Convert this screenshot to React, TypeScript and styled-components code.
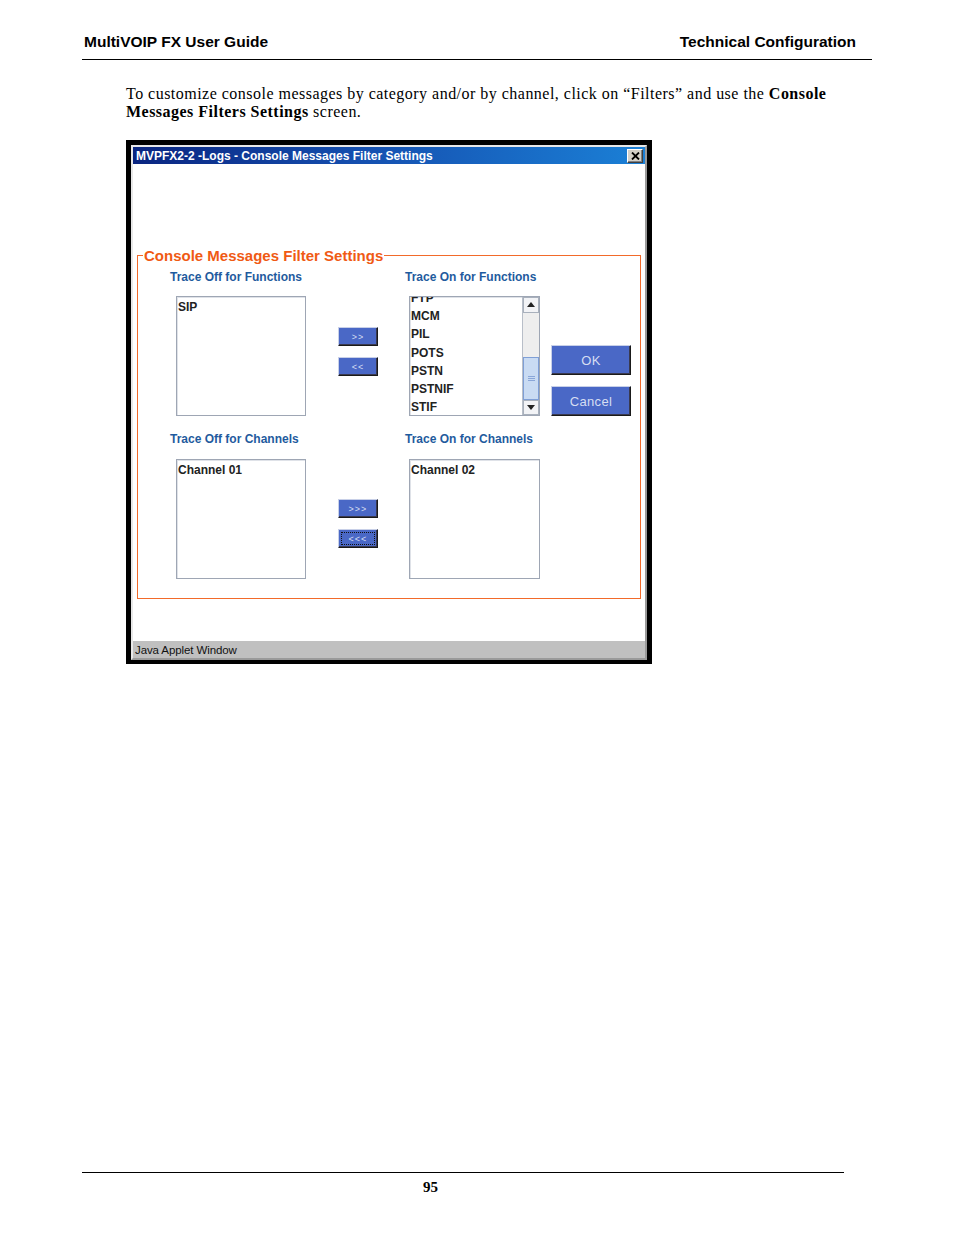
import React from "react";
import styled, { createGlobalStyle } from "styled-components";

const GlobalStyle = createGlobalStyle`
  html, body {
    margin: 0;
    padding: 0;
    background: #fff;
  }
  body {
    font-family: "Liberation Sans", Arial, sans-serif;
    color: #000;
  }
`;

const Page = styled.div`
  width: 954px;
  min-height: 1235px;
  box-sizing: border-box;
  display: flex;
  flex-direction: column;
  padding-top: 33px;
  padding-bottom: 39px;
`;

const Header = styled.header`
  margin-left: 82px;
  width: 790px;
  box-sizing: border-box;
  display: flex;
  justify-content: space-between;
  padding: 0 16px 8px 2px;
  border-bottom: 1px solid #000;
  font-family: "Liberation Sans", Arial, sans-serif;
  font-weight: bold;
  font-size: 15.5px;
  line-height: 18px;
`;

const Main = styled.main`
  margin-left: 126px;
  display: flex;
  flex-direction: column;
`;

const Intro = styled.p`
  margin: 25px 0 19px;
  width: 720px;
  font-family: "Liberation Serif", "Times New Roman", serif;
  font-size: 16px;
  line-height: 18px;
  letter-spacing: 0.48px;
  b {
    font-weight: bold;
  }
`;

/* ---------- applet window ---------- */

const Frame = styled.div`
  width: 526px;
  box-sizing: border-box;
  background: #000;
  padding: 5px 5px 4px 5px;
`;

const Window = styled.div`
  display: flex;
  flex-direction: column;
  border: 2px solid;
  border-color: #e8e8e8 #9a9a9a #9a9a9a #e8e8e8;
  background: #fff;
`;

const TitleBar = styled.div`
  height: 17px;
  display: flex;
  align-items: center;
  justify-content: space-between;
  padding: 0 2px 0 3px;
  background: linear-gradient(90deg, #0a2580 0%, #1550b0 45%, #1b80d6 100%);
  color: #fff;
  font-weight: bold;
  font-size: 12px;
`;

const CloseButton = styled.div`
  width: 16px;
  height: 14px;
  box-sizing: border-box;
  display: flex;
  align-items: center;
  justify-content: center;
  background: #d4d0c8;
  border: 1px solid;
  border-color: #fff #404040 #404040 #fff;
  box-shadow: inset -1px -1px 0 #808080;
`;

const Content = styled.div`
  height: 477px;
  box-sizing: border-box;
  padding: 91px 4px 0;
`;

const StatusBar = styled.div`
  height: 17px;
  display: flex;
  align-items: center;
  padding-left: 2px;
  background: #c0c0c0;
  font-size: 11.5px;
  color: #111;
  letter-spacing: -0.1px;
`;

const GroupBox = styled.div`
  border: 1px solid #f26a2a;
  padding: 0 0 19px 32px;
`;

const Legend = styled.div`
  width: fit-content;
  margin: -9px 0 6px -27px;
  padding: 0 1px;
  background: #fff;
  color: #f05a14;
  font-weight: bold;
  font-size: 15px;
  line-height: 17px;
`;

const Section = styled.div<{ $gap: number; $top?: number }>`
  display: grid;
  grid-template-columns: 168px 67px 146px 80px;
  grid-template-rows: 14px 120px;
  row-gap: ${(p) => p.$gap}px;
  margin-top: ${(p) => p.$top ?? 0}px;
`;

const Label = styled.div<{ $col: number }>`
  grid-column: ${(p) => p.$col};
  grid-row: 1;
  color: #1f5b9e;
  font-weight: bold;
  font-size: 12px;
  line-height: 14px;
  white-space: nowrap;
`;

const ListBox = styled.div<{ $col: number; $inset: number }>`
  grid-column: ${(p) => p.$col};
  grid-row: 2;
  margin-left: ${(p) => p.$inset}px;
  width: ${(p) => (p.$col === 1 ? 130 : 131)}px;
  height: 120px;
  box-sizing: border-box;
  border: 1px solid #9ea6b4;
  box-shadow: inset 1px 1px 0 #dfe2e8;
  background: #fff;
  display: flex;
  overflow: hidden;
`;

const Items = styled.div<{ $shift?: number }>`
  flex: 1;
  padding: 1px 0 0 1px;
  margin-top: ${(p) => p.$shift ?? 0}px;
`;

const Item = styled.div`
  font-weight: bold;
  font-size: 12px;
  line-height: 18.2px;
  color: #222;
  white-space: nowrap;
`;

const Scrollbar = styled.div`
  width: 16px;
  display: flex;
  flex-direction: column;
  border-left: 1px solid #b8bec8;
  background: #eeeeee;
`;

const ScrollArrow = styled.div<{ $h: number }>`
  height: ${(p) => p.$h}px;
  box-sizing: border-box;
  display: flex;
  align-items: center;
  justify-content: center;
  background: #f2f3f6;
  border: 1px solid #a8b0bc;
`;

const Track = styled.div`
  flex: 1;
  display: flex;
  flex-direction: column;
`;

const Thumb = styled.div`
  margin-top: 44px;
  height: 43px;
  box-sizing: border-box;
  display: flex;
  flex-direction: column;
  align-items: center;
  justify-content: center;
  gap: 1px;
  background: #c9dbf3;
  border: 1px solid #7f9fd6;
  span {
    width: 7px;
    height: 1px;
    background: #8aa6d8;
  }
`;

const ArrowColumn = styled.div<{ $offset: number }>`
  grid-column: 2;
  grid-row: 2;
  display: flex;
  flex-direction: column;
  gap: 11px;
  padding-top: ${(p) => p.$offset}px;
`;

const ActionColumn = styled.div`
  grid-column: 4;
  grid-row: 2;
  display: flex;
  flex-direction: column;
  justify-content: flex-end;
  gap: 11px;
`;

const BlueButton = styled.div<{ $w: number; $h: number; $size: number; $focus?: boolean }>`
  width: ${(p) => p.$w}px;
  height: ${(p) => p.$h}px;
  box-sizing: border-box;
  display: flex;
  align-items: center;
  justify-content: center;
  background: #4a68c6;
  border: 1px solid;
  border-color: #c8d0e8 #1a1a1a #1a1a1a #c8d0e8;
  box-shadow: inset -1px -1px 0 #3a3a50;
  color: #d6def2;
  font-size: ${(p) => p.$size}px;
  letter-spacing: ${(p) => (p.$size < 12 ? 1 : 0.3)}px;
  outline: ${(p) => (p.$focus ? "1px dotted #111" : "none")};
  outline-offset: -4px;
`;

const Footer = styled.footer`
  margin-top: auto;
  margin-left: 82px;
  width: 762px;
  border-top: 1px solid #000;
  padding: 6px 0 0 341px;
  box-sizing: border-box;
  font-family: "Liberation Serif", "Times New Roman", serif;
  font-weight: bold;
  font-size: 15px;
  line-height: 17px;
`;

const CloseGlyph = () => (
  <svg width="9" height="8" viewBox="0 0 9 8">
    <path d="M1 0.5 L8 7.5 M8 0.5 L1 7.5" stroke="#000" strokeWidth="1.8" />
  </svg>
);

const Triangle = ({ down }: { down?: boolean }) => (
  <svg width="8" height="5" viewBox="0 0 8 5">
    <path d={down ? "M0 0 H8 L4 5 Z" : "M0 5 H8 L4 0 Z"} fill="#222" />
  </svg>
);

const functionsOn = ["FTP", "MCM", "PIL", "POTS", "PSTN", "PSTNIF", "STIF"];

export default function App() {
  return (
    <>
      <GlobalStyle />
      <Page>
        <Header>
          <span>MultiVOIP FX User Guide</span>
          <span>Technical Configuration</span>
        </Header>
        <Main>
          <Intro>
            To customize console messages by category and/or by channel, click on “Filters” and use the{" "}
            <b>Console</b> <b>Messages Filters Settings</b> screen.
          </Intro>
          <Frame>
            <Window>
              <TitleBar>
                <span>MVPFX2-2 -Logs - Console Messages Filter Settings</span>
                <CloseButton>
                  <CloseGlyph />
                </CloseButton>
              </TitleBar>
              <Content>
                <GroupBox>
                  <Legend>Console Messages Filter Settings</Legend>
                  <Section $gap={12}>
                    <Label $col={1}>Trace Off for Functions</Label>
                    <Label $col={3}>Trace On for Functions</Label>
                    <ListBox $col={1} $inset={6}>
                      <Items>
                        <Item>SIP</Item>
                      </Items>
                    </ListBox>
                    <ArrowColumn $offset={31}>
                      <BlueButton $w={40} $h={19} $size={9}>&gt;&gt;</BlueButton>
                      <BlueButton $w={40} $h={19} $size={9}>&lt;&lt;</BlueButton>
                    </ArrowColumn>
                    <ListBox $col={3} $inset={4}>
                      <Items $shift={-9}>
                        {functionsOn.map((f) => (
                          <Item key={f}>{f}</Item>
                        ))}
                      </Items>
                      <Scrollbar>
                        <ScrollArrow $h={16}>
                          <Triangle />
                        </ScrollArrow>
                        <Track>
                          <Thumb>
                            <span />
                            <span />
                            <span />
                          </Thumb>
                        </Track>
                        <ScrollArrow $h={16}>
                          <Triangle down />
                        </ScrollArrow>
                      </Scrollbar>
                    </ListBox>
                    <ActionColumn>
                      <BlueButton $w={80} $h={30} $size={13}>OK</BlueButton>
                      <BlueButton $w={80} $h={30} $size={13}>Cancel</BlueButton>
                    </ActionColumn>
                  </Section>
                  <Section $gap={13} $top={16}>
                    <Label $col={1}>Trace Off for Channels</Label>
                    <Label $col={3}>Trace On for Channels</Label>
                    <ListBox $col={1} $inset={6}>
                      <Items>
                        <Item>Channel 01</Item>
                      </Items>
                    </ListBox>
                    <ArrowColumn $offset={40}>
                      <BlueButton $w={40} $h={19} $size={9}>&gt;&gt;&gt;</BlueButton>
                      <BlueButton $w={40} $h={19} $size={9} $focus>
                        &lt;&lt;&lt;
                      </BlueButton>
                    </ArrowColumn>
                    <ListBox $col={3} $inset={4}>
                      <Items>
                        <Item>Channel 02</Item>
                      </Items>
                    </ListBox>
                  </Section>
                </GroupBox>
              </Content>
              <StatusBar>Java Applet Window</StatusBar>
            </Window>
          </Frame>
        </Main>
        <Footer>95</Footer>
      </Page>
    </>
  );
}
